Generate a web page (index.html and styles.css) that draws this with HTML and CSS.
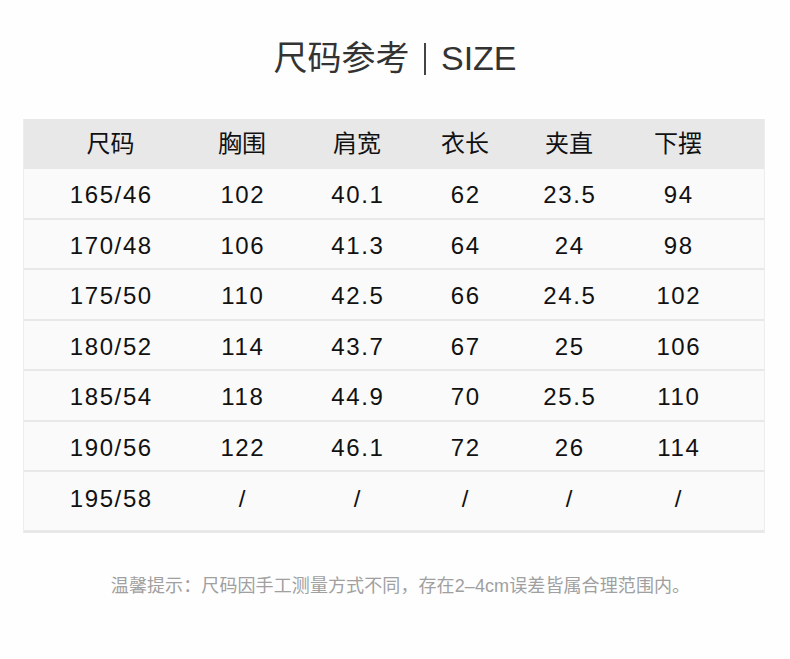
FILE: index.html
```html
<!DOCTYPE html>
<html lang="zh">
<head>
<meta charset="utf-8">
<link rel="stylesheet" href="styles.css">
</head>
<body>
<div class="page">
  <h1 class="title">尺码参考<span class="bar"></span>SIZE</h1>
  <div class="table">
    <div class="row head">
      <div class="cell">尺码</div><div class="cell">胸围</div><div class="cell">肩宽</div><div class="cell">衣长</div><div class="cell">夹直</div><div class="cell">下摆</div>
    </div>
    <div class="row">
      <div class="cell">165/46</div><div class="cell">102</div><div class="cell">40.1</div><div class="cell">62</div><div class="cell">23.5</div><div class="cell">94</div>
    </div>
    <div class="row">
      <div class="cell">170/48</div><div class="cell">106</div><div class="cell">41.3</div><div class="cell">64</div><div class="cell">24</div><div class="cell">98</div>
    </div>
    <div class="row">
      <div class="cell">175/50</div><div class="cell">110</div><div class="cell">42.5</div><div class="cell">66</div><div class="cell">24.5</div><div class="cell">102</div>
    </div>
    <div class="row">
      <div class="cell">180/52</div><div class="cell">114</div><div class="cell">43.7</div><div class="cell">67</div><div class="cell">25</div><div class="cell">106</div>
    </div>
    <div class="row">
      <div class="cell">185/54</div><div class="cell">118</div><div class="cell">44.9</div><div class="cell">70</div><div class="cell">25.5</div><div class="cell">110</div>
    </div>
    <div class="row">
      <div class="cell">190/56</div><div class="cell">122</div><div class="cell">46.1</div><div class="cell">72</div><div class="cell">26</div><div class="cell">114</div>
    </div>
    <div class="row last">
      <div class="cell">195/58</div><div class="cell">/</div><div class="cell">/</div><div class="cell">/</div><div class="cell">/</div><div class="cell">/</div>
    </div>
  </div>
  <p class="note">温馨提示：尺码因手工测量方式不同，存在2–4cm误差皆属合理范围内。</p>
</div>
</body>
</html>
```
FILE: styles.css
```css
* { box-sizing: border-box; }
html, body { margin: 0; padding: 0; background: #fefefe; }
body {
  font-family: "Liberation Sans", "Noto Sans CJK SC", sans-serif;
  color: #111;
}
.page {
  width: 790px;
  height: 659px;
  padding-top: 38px;
}
.title {
  margin: 0;
  height: 40px;
  line-height: 40px;
  font-size: 34px;
  font-weight: 400;
  color: #333;
  text-align: center;
  display: flex;
  justify-content: center;
  align-items: center;
}
.title .bar {
  display: inline-block;
  width: 1.5px;
  height: 32px;
  background: #444;
  margin: 2px 15px 0 15px;
}
.table {
  margin: 41px 0 0 23px;
  width: 742px;
  border-left: 1px solid #ededed;
  border-right: 1px solid #ededed;
}
.row {
  display: grid;
  grid-template-columns: 173px 90px 140px 76px 132px 86px 1fr;
  height: 50.5px;
  padding-top: 4px;
  border-bottom: 2px solid #e8e8e8;
  background: #fafafa;
  align-items: center;
  font-size: 24px;
}
.row.head {
  height: 50px;
  padding-top: 0;
  padding-bottom: 5px;
  background: #e8e8e8;
  border-bottom: none;
}
.row.last {
  height: 61px;
  padding-bottom: 9px;
  border-bottom-width: 3px;
}
.cell {
  text-align: center;
  white-space: nowrap;
  letter-spacing: 1.6px;
  padding-left: 1.6px;
}
.head .cell {
  letter-spacing: 0;
  padding-left: 0;
}
.note {
  margin: 41px 0 0;
  padding-left: 11px;
  text-align: center;
  font-size: 18px;
  color: #a0a0a0;
  line-height: 24px;
  letter-spacing: 0.1px;
}
```
